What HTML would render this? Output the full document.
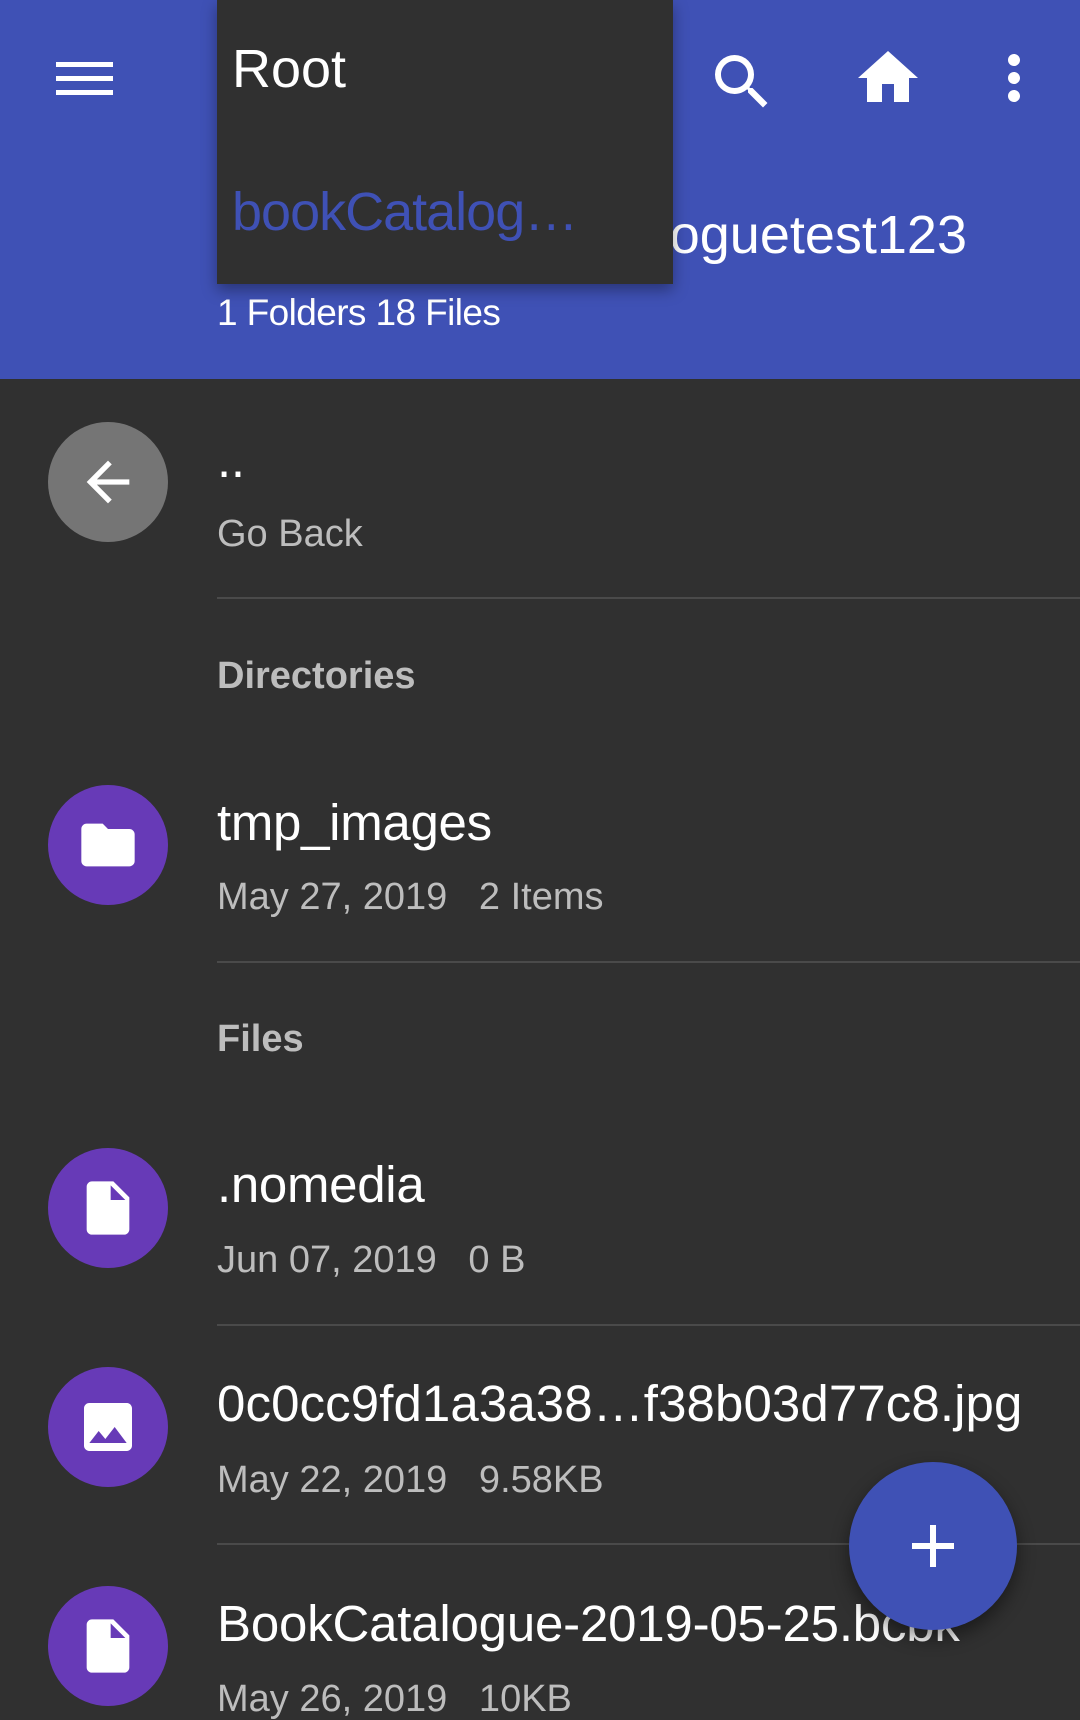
<!DOCTYPE html>
<html><head><meta charset="utf-8"><style>
*{margin:0;padding:0;box-sizing:border-box}
body{width:1080px;height:1699px;background:#303030;font-family:"Liberation Sans",sans-serif;position:relative;overflow:hidden;color:#fff}
.hdr{position:absolute;left:0;top:0;width:1080px;height:379px;background:#3F51B5}
.t{position:absolute;white-space:nowrap;line-height:1}
.circ{position:absolute;width:120px;height:120px;border-radius:50%;background:#673AB7;display:flex;align-items:center;justify-content:center}
.div{position:absolute;left:217px;right:0;height:2px;background:#4a4a4a}
.title{font-size:51px;color:#fff;letter-spacing:-0.3px}
.sub{font-size:38px;color:#bdbdbd}
.sec{font-size:38px;color:#bdbdbd;font-weight:bold}
</style></head><body>
<div class="hdr"></div>
<svg style="position:absolute;left:56px;top:62px" width="57" height="33" viewBox="0 0 57 33"><rect x="0" y="0" width="57" height="5" fill="#fff"/><rect x="0" y="14" width="57" height="5" fill="#fff"/><rect x="0" y="28" width="57" height="5" fill="#fff"/></svg>
<div class="t" style="right:113px;top:208px;font-size:54px;color:#fff">bookCataloguetest123</div>
<div class="t" style="left:217px;top:294px;font-size:37px;color:#fff;letter-spacing:-0.6px">1 Folders 18 Files</div>
<svg style="position:absolute;left:706px;top:46px" width="72" height="72" viewBox="0 0 24 24"><path fill="#fff" d="M15.5 14h-.79l-.28-.27A6.47 6.47 0 0 0 16 9.5 6.5 6.5 0 1 0 9.5 16c1.61 0 3.09-.59 4.23-1.57l.27.28v.79l5 4.99L20.49 19l-4.99-5zm-6 0C7.01 14 5 11.99 5 9.5S7.01 5 9.5 5 14 7.01 14 9.5 11.99 14 9.5 14z"/></svg>
<svg style="position:absolute;left:852px;top:42px" width="72" height="72" viewBox="0 0 24 24"><path fill="#fff" d="M10 20v-6h4v6h5v-8h3L12 3 2 12h3v8z"/></svg>
<svg style="position:absolute;left:978px;top:42px" width="72" height="72" viewBox="0 0 24 24"><path fill="#fff" d="M12 8c1.1 0 2-.9 2-2s-.9-2-2-2-2 .9-2 2 .9 2 2 2zm0 2c-1.1 0-2 .9-2 2s.9 2 2 2 2-.9 2-2-.9-2-2-2zm0 6c-1.1 0-2 .9-2 2s.9 2 2 2 2-.9 2-2-.9-2-2-2z"/></svg>
<div style="position:absolute;left:217px;top:0;width:456px;height:284px;background:#303030;box-shadow:0 6px 14px rgba(0,0,0,0.35)">
<div class="t" style="left:15px;top:42px;font-size:54px;color:#fff">Root</div>
<div class="t" style="left:15px;top:185px;font-size:54px;color:#3F51B5;letter-spacing:-1px">bookCatalog…</div>
</div>
<div class="circ" style="left:48px;top:422px;background:#757575"><svg width="64" height="64" viewBox="0 0 24 24"><path fill="#fff" d="M20 11H7.83l5.59-5.59L12 4l-8 8 8 8 1.41-1.41L7.83 13H20v-2z"/></svg></div>
<div class="t title" style="left:217px;top:434px">..</div>
<div class="t sub" style="left:217px;top:515px">Go Back</div>
<div class="div" style="top:597px"></div>
<div class="t sec" style="left:217px;top:657px">Directories</div>
<div class="circ" style="top:785px;left:48px"><svg width="64" height="64" viewBox="0 0 24 24"><path fill="#fff" d="M10 4H4c-1.1 0-2 .9-2 2v12c0 1.1.9 2 2 2h16c1.1 0 2-.9 2-2V8c0-1.1-.9-2-2-2h-8l-2-2z"/></svg></div>
<div class="t title" style="left:217px;top:797px">tmp_images</div>
<div class="t sub" style="left:217px;top:878px">May 27, 2019&nbsp;&nbsp;&nbsp;2 Items</div>
<div class="div" style="top:961px"></div>
<div class="t sec" style="left:217px;top:1020px">Files</div>
<div class="circ" style="top:1148px;left:48px"><svg width="64" height="64" viewBox="0 0 24 24"><path fill="#fff" d="M6 2c-1.1 0-2 .9-2 2v16c0 1.1.9 2 2 2h12c1.1 0 2-.9 2-2V8l-6-6H6zm7 7V3.5L18.5 9H13z"/></svg></div>
<div class="t title" style="left:217px;top:1159px">.nomedia</div>
<div class="t sub" style="left:217px;top:1241px">Jun 07, 2019&nbsp;&nbsp;&nbsp;0 B</div>
<div class="div" style="top:1324px"></div>
<div class="circ" style="top:1367px;left:48px"><svg width="64" height="64" viewBox="0 0 24 24"><path fill="#fff" d="M21 19V5c0-1.1-.9-2-2-2H5c-1.1 0-2 .9-2 2v14c0 1.1.9 2 2 2h14c1.1 0 2-.9 2-2zM8.5 13.5l2.5 3.01L14.5 12l4.5 6H5l3.5-4.5z"/></svg></div>
<div class="t title" style="left:217px;top:1378px;letter-spacing:0.1px">0c0cc9fd1a3a38…f38b03d77c8.jpg</div>
<div class="t sub" style="left:217px;top:1461px">May 22, 2019&nbsp;&nbsp;&nbsp;9.58KB</div>
<div class="div" style="top:1543px"></div>
<div class="circ" style="top:1586px;left:48px"><svg width="64" height="64" viewBox="0 0 24 24"><path fill="#fff" d="M6 2c-1.1 0-2 .9-2 2v16c0 1.1.9 2 2 2h12c1.1 0 2-.9 2-2V8l-6-6H6zm7 7V3.5L18.5 9H13z"/></svg></div>
<div class="t title" style="left:217px;top:1598px;letter-spacing:-0.2px">BookCatalogue-2019-05-25.bcbk</div>
<div class="t sub" style="left:217px;top:1680px">May 26, 2019&nbsp;&nbsp;&nbsp;10KB</div>
<div style="position:absolute;left:849px;top:1462px;width:168px;height:168px;border-radius:50%;background:#3F51B5;box-shadow:0 8px 18px rgba(0,0,0,0.45);display:flex;align-items:center;justify-content:center">
<svg width="72" height="72" viewBox="0 0 24 24"><path fill="#fff" d="M19 13h-6v6h-2v-6H5v-2h6V5h2v6h6v2z"/></svg></div>
</body></html>
